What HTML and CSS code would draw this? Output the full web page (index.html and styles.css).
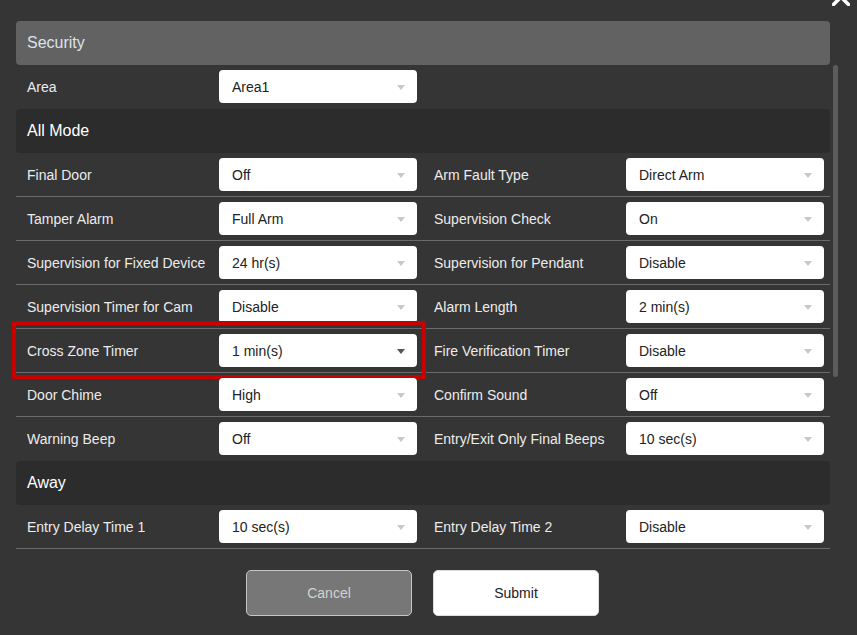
FILE: index.html
```html
<!DOCTYPE html>
<html>
<head>
<meta charset="utf-8">
<title>Security</title>
<link rel="stylesheet" href="styles.css">
</head>
<body>
<div class="modal">
  <svg class="close" width="18" height="18" viewBox="0 0 18 18"><path d="M1.5 1.5 L16.5 16.5 M16.5 1.5 L1.5 16.5" stroke="#ffffff" stroke-width="3.6" stroke-linecap="round" fill="none"/></svg>
  <div class="title-bar">Security</div>
  <div class="body">
    <div class="list">
      <div class="row last">
        <div class="field"><span class="label">Area</span><div class="select"><span>Area1</span><i class="caret"></i></div></div>
      </div>
      <div class="section">All Mode</div>
      <div class="row">
        <div class="field"><span class="label">Final Door</span><div class="select"><span>Off</span><i class="caret"></i></div></div>
        <div class="field"><span class="label">Arm Fault Type</span><div class="select"><span>Direct Arm</span><i class="caret"></i></div></div>
      </div>
      <div class="row">
        <div class="field"><span class="label">Tamper Alarm</span><div class="select"><span>Full Arm</span><i class="caret"></i></div></div>
        <div class="field"><span class="label">Supervision Check</span><div class="select"><span>On</span><i class="caret"></i></div></div>
      </div>
      <div class="row">
        <div class="field"><span class="label">Supervision for Fixed Device</span><div class="select"><span>24 hr(s)</span><i class="caret"></i></div></div>
        <div class="field"><span class="label">Supervision for Pendant</span><div class="select"><span>Disable</span><i class="caret"></i></div></div>
      </div>
      <div class="row">
        <div class="field"><span class="label">Supervision Timer for Cam</span><div class="select"><span>Disable</span><i class="caret"></i></div></div>
        <div class="field"><span class="label">Alarm Length</span><div class="select"><span>2 min(s)</span><i class="caret"></i></div></div>
      </div>
      <div class="row">
        <div class="field"><span class="label">Cross Zone Timer</span><div class="select active"><span>1 min(s)</span><i class="caret"></i></div><div class="highlight"></div></div>
        <div class="field"><span class="label">Fire Verification Timer</span><div class="select"><span>Disable</span><i class="caret"></i></div></div>
      </div>
      <div class="row">
        <div class="field"><span class="label">Door Chime</span><div class="select"><span>High</span><i class="caret"></i></div></div>
        <div class="field"><span class="label">Confirm Sound</span><div class="select"><span>Off</span><i class="caret"></i></div></div>
      </div>
      <div class="row last">
        <div class="field"><span class="label">Warning Beep</span><div class="select"><span>Off</span><i class="caret"></i></div></div>
        <div class="field"><span class="label">Entry/Exit Only Final Beeps</span><div class="select"><span>10 sec(s)</span><i class="caret"></i></div></div>
      </div>
      <div class="section">Away</div>
      <div class="row">
        <div class="field"><span class="label">Entry Delay Time 1</span><div class="select"><span>10 sec(s)</span><i class="caret"></i></div></div>
        <div class="field"><span class="label">Entry Delay Time 2</span><div class="select"><span>Disable</span><i class="caret"></i></div></div>
      </div>
    </div>
    <div class="scrollbar"><div class="thumb"></div></div>
  </div>
  <div class="actions">
    <button class="btn cancel">Cancel</button>
    <button class="btn submit">Submit</button>
  </div>
</div>
</body>
</html>
```

FILE: styles.css
```css
html, body {
  margin: 0;
  padding: 0;
  background: #353535;
  height: 100%;
  overflow: hidden;
}

body {
  font-family: "Liberation Sans", Arial, sans-serif;
  font-size: 14px;
  color: #ececec;
}

.modal {
  position: relative;
  padding: 21px 0 0 16px;
  width: 841px;
}

.close {
  position: absolute;
  left: 832px;
  top: -12px;
}

.title-bar {
  width: 814px;
  height: 44px;
  box-sizing: border-box;
  background: #626262;
  border-radius: 4px;
  padding-left: 11px;
  display: flex;
  align-items: center;
  font-size: 16px;
  color: #dbe3eb;
}

.body {
  display: flex;
  height: 484px;
}

.list {
  width: 814px;
  height: 484px;
}

.scrollbar {
  width: 5px;
  margin-left: 3px;
}

.thumb {
  height: 312px;
  background: #5c5c5c;
  border-radius: 3px;
}

.section {
  height: 44px;
  box-sizing: border-box;
  background: #2c2c2c;
  border-radius: 4px;
  padding-left: 11px;
  display: flex;
  align-items: center;
  font-size: 16px;
  color: #ffffff;
}

.row {
  display: grid;
  grid-template-columns: 407px 407px;
  height: 44px;
  box-sizing: border-box;
  border-bottom: 1px solid #6a6a6a;
}

.row.last {
  border-bottom: none;
}

.field {
  position: relative;
  display: flex;
  align-items: center;
  padding-left: 11px;
  height: 43px;
}

.label {
  flex: 0 0 192px;
  white-space: nowrap;
  color: #ececec;
}

.select {
  width: 198px;
  height: 33px;
  box-sizing: border-box;
  background: #ffffff;
  border-radius: 4px;
  display: flex;
  align-items: center;
  justify-content: space-between;
  padding: 0 12px 0 13px;
  color: #222222;
}

.caret {
  width: 0;
  height: 0;
  border-left: 4.5px solid transparent;
  border-right: 4.5px solid transparent;
  border-top: 5px solid #c9c9c9;
  margin-top: 1px;
}

.select.active .caret {
  border-top-color: #555555;
}

.highlight {
  position: absolute;
  left: -4px;
  top: -8px;
  width: 414px;
  height: 58px;
  box-sizing: border-box;
  border: 4px solid #c80000;
  pointer-events: none;
}

.actions {
  width: 814px;
  box-sizing: border-box;
  display: flex;
  gap: 21px;
  padding-left: 230px;
  margin-top: 21px;
}

.btn {
  width: 166px;
  height: 46px;
  border-radius: 5px;
  font-family: "Liberation Sans", Arial, sans-serif;
  font-size: 14px;
  cursor: pointer;
}

.btn.cancel {
  background: #777777;
  border: 1px solid #c6c6c6;
  color: #d2d2d2;
}

.btn.submit {
  background: #ffffff;
  border: 1px solid #dddddd;
  color: #222222;
}
```
